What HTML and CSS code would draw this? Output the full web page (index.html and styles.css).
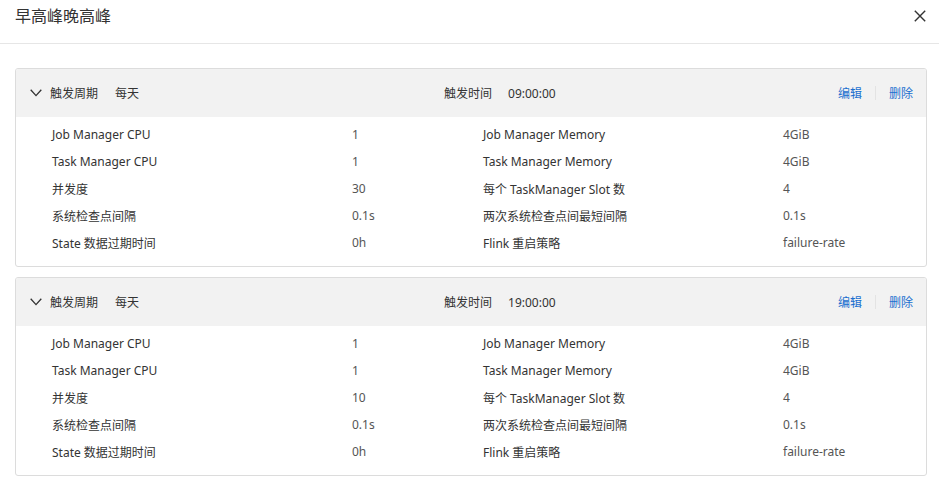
FILE: index.html
```html
<!DOCTYPE html>
<html>
<head>
    <meta charset="utf-8">
    <link rel="stylesheet" href="styles.css">
</head>
<body>
    <div class="dialog">
        <div class="dialog-header">
            <span class="dialog-title">早高峰晚高峰</span>
            <button class="close-btn" aria-label="close">
                <svg width="12" height="12" viewBox="0 0 12 12"><path d="M0.8 0.8 L11.2 11.2 M11.2 0.8 L0.8 11.2" stroke="#333" stroke-width="1.4" fill="none"/></svg>
            </button>
        </div>

        <div class="dialog-body">
            <div class="plan-card">
                <div class="plan-head">
                    <div class="plan-cycle">
                        <svg class="chevron" width="12" height="8" viewBox="0 0 12 8"><path d="M0.7 0.7 L6 6.6 L11.3 0.7" stroke="#333" stroke-width="1.3" fill="none"/></svg>
                        <span>触发周期</span>
                        <span class="head-value">每天</span>
                    </div>
                    <div class="plan-time">
                        <span>触发时间</span>
                        <span class="head-value">09:00:00</span>
                    </div>
                    <div class="plan-actions">
                        <a href="#">编辑</a>
                        <span class="sep"></span>
                        <a href="#">删除</a>
                    </div>
                </div>
                <div class="plan-grid">
                    <span class="label">Job Manager CPU</span><span class="value">1</span>
                    <span class="label">Job Manager Memory</span><span class="value">4GiB</span>
                    <span class="label">Task Manager CPU</span><span class="value">1</span>
                    <span class="label">Task Manager Memory</span><span class="value">4GiB</span>
                    <span class="label">并发度</span><span class="value">30</span>
                    <span class="label">每个 TaskManager Slot 数</span><span class="value">4</span>
                    <span class="label">系统检查点间隔</span><span class="value">0.1s</span>
                    <span class="label">两次系统检查点间最短间隔</span><span class="value">0.1s</span>
                    <span class="label">State 数据过期时间</span><span class="value">0h</span>
                    <span class="label">Flink 重启策略</span><span class="value">failure-rate</span>
                </div>
            </div>

            <div class="plan-card">
                <div class="plan-head">
                    <div class="plan-cycle">
                        <svg class="chevron" width="12" height="8" viewBox="0 0 12 8"><path d="M0.7 0.7 L6 6.6 L11.3 0.7" stroke="#333" stroke-width="1.3" fill="none"/></svg>
                        <span>触发周期</span>
                        <span class="head-value">每天</span>
                    </div>
                    <div class="plan-time">
                        <span>触发时间</span>
                        <span class="head-value">19:00:00</span>
                    </div>
                    <div class="plan-actions">
                        <a href="#">编辑</a>
                        <span class="sep"></span>
                        <a href="#">删除</a>
                    </div>
                </div>
                <div class="plan-grid">
                    <span class="label">Job Manager CPU</span><span class="value">1</span>
                    <span class="label">Job Manager Memory</span><span class="value">4GiB</span>
                    <span class="label">Task Manager CPU</span><span class="value">1</span>
                    <span class="label">Task Manager Memory</span><span class="value">4GiB</span>
                    <span class="label">并发度</span><span class="value">10</span>
                    <span class="label">每个 TaskManager Slot 数</span><span class="value">4</span>
                    <span class="label">系统检查点间隔</span><span class="value">0.1s</span>
                    <span class="label">两次系统检查点间最短间隔</span><span class="value">0.1s</span>
                    <span class="label">State 数据过期时间</span><span class="value">0h</span>
                    <span class="label">Flink 重启策略</span><span class="value">failure-rate</span>
                </div>
            </div>
        </div>
    </div>
</body>
</html>
```

FILE: styles.css
```css
body {
    margin: 0;
    background-color: #fff;
    font-family: "Noto Sans", "Noto Sans CJK SC", sans-serif;
    color: #333;
}

.dialog {
    width: 939px;
}

.dialog-header {
    display: flex;
    justify-content: space-between;
    align-items: flex-start;
    height: 43px;
    padding: 0 13px 0 15px;
    border-bottom: 1px solid #e6e6e6;
}

.dialog-title {
    font-size: 16px;
    line-height: 24px;
    margin-top: 4px;
}

.close-btn {
    border: none;
    background: none;
    padding: 0;
    margin-top: 10px;
    width: 12px;
    height: 12px;
    cursor: pointer;
}

.close-btn svg {
    display: block;
}

.dialog-body {
    display: flex;
    flex-direction: column;
    gap: 10px;
    padding: 24px 12px 0 15px;
}

.plan-card {
    border: 1px solid #dcdcdc;
    border-radius: 3px;
    overflow: hidden;
}

.plan-head {
    display: flex;
    align-items: center;
    height: 48px;
    padding: 0 13px 0 14px;
    background-color: #f2f2f2;
    font-size: 12px;
}

.plan-cycle {
    display: flex;
    align-items: center;
    width: 414px;
}

.chevron {
    margin-right: 8px;
}

.head-value {
    margin-left: 17px;
}

.plan-time {
    display: flex;
    align-items: center;
    flex: 1;
}

.plan-time .head-value {
    margin-left: 16px;
}

.plan-actions {
    display: flex;
    align-items: center;
    gap: 13px;
}

.plan-actions a {
    color: #1a6fcf;
    text-decoration: none;
}

.sep {
    width: 1px;
    height: 14px;
    background-color: #e3e3e3;
}

.plan-grid {
    display: grid;
    grid-template-columns: 300px 131px 300px 1fr;
    grid-auto-rows: 27px;
    align-items: center;
    padding: 4px 0 10px 36px;
    font-size: 12px;
}

.label {
    color: #333;
}

.value {
    color: #555;
}
```
